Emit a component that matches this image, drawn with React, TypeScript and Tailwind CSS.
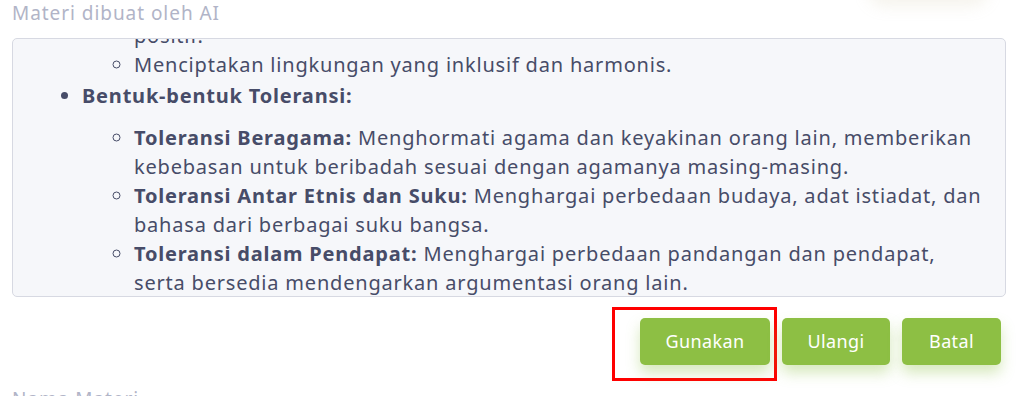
const font = { fontFamily: '"Noto Sans", "Liberation Sans", sans-serif' }

const items = [
  {
    title: 'Toleransi Beragama:',
    text: ' Menghormati agama dan keyakinan orang lain, memberikan kebebasan untuk beribadah sesuai dengan agamanya masing-masing.',
  },
  {
    title: 'Toleransi Antar Etnis dan Suku:',
    text: ' Menghargai perbedaan budaya, adat istiadat, dan bahasa dari berbagai suku bangsa.',
  },
  {
    title: 'Toleransi dalam Pendapat:',
    text: ' Menghargai perbedaan pandangan dan pendapat, serta bersedia mendengarkan argumentasi orang lain.',
  },
]

export default function App() {
  return (
    <div className="w-[1024px] h-[396px] overflow-hidden bg-white" style={font}>
      <div className="flex flex-col px-3">
        {/* Label */}
        <div className="relative h-[38px]">
          <div className="absolute right-6 -top-8 h-8 w-[120px] rounded-full shadow-[0_6px_16px_rgba(200,190,150,0.18)]" />
          <p className="pt-px text-[19px] leading-[24px] tracking-[0.05em] text-[#b1b4c7]">Materi dibuat oleh AI</p>
        </div>

        {/* AI content */}
        <div className="h-[259px] w-[994px] overflow-hidden rounded-[5px] border border-[#d7d9e2] bg-[#f6f7fa]">
          <div className="-mt-[47px] pl-[56px] pr-4 text-[20px] leading-[29px] tracking-[0.04em] text-[#474c68]">
            <ul className="list-disc pl-[13px]">
              <li>
                <ul className="list-[circle] pl-[52px]">
                  <li>
                    Membangun hubungan sosial yang baik dan
                    <br />
                    positif.
                  </li>
                  <li>Menciptakan lingkungan yang inklusif dan harmonis.</li>
                </ul>
              </li>
              <li className="mt-[2px]">
                <span className="font-bold">Bentuk-bentuk Toleransi:</span>
                <ul className="mt-[13px] list-[circle] pl-[52px]">
                  {items.map((it) => (
                    <li key={it.title}>
                      <span className="font-bold">{it.title}</span>
                      {it.text}
                    </li>
                  ))}
                </ul>
              </li>
            </ul>
          </div>
        </div>

        {/* Actions */}
        <div className="flex justify-end gap-3 pr-[11px] pt-[21px]">
          <div className="-mt-[11px] -mb-[16px] -mr-[7px] flex items-start border-[3px] border-[#ff0000] pt-[8px] pb-[13px] pl-[25px] pr-[4px]">
            <button className="h-[47px] w-[130px] rounded-[5px] bg-[#8dbf44] text-[18px] tracking-[0.02em] text-white shadow-[0_8px_14px_rgba(141,191,68,0.35)]">
              Gunakan
            </button>
          </div>
          <button className="h-[47px] w-[108px] rounded-[5px] bg-[#8dbf44] text-[18px] tracking-[0.02em] text-white shadow-[0_8px_14px_rgba(141,191,68,0.35)]">
            Ulangi
          </button>
          <button className="h-[47px] w-[99px] rounded-[5px] bg-[#8dbf44] text-[18px] tracking-[0.02em] text-white shadow-[0_8px_14px_rgba(141,191,68,0.35)]">
            Batal
          </button>
        </div>

        <p className="pt-[22px] text-[19px] leading-[24px] tracking-[0.05em] text-[#b1b4c7]">Nama Materi</p>
      </div>
    </div>
  )
}
